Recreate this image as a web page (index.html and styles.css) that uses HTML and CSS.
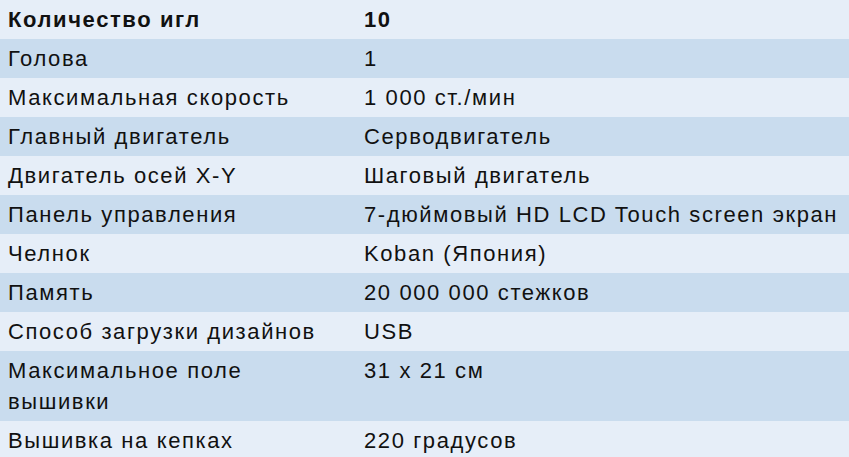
FILE: index.html
```html
<!DOCTYPE html>
<html lang="ru">
<head>
<meta charset="utf-8">
<link rel="stylesheet" href="styles.css">
</head>
<body>
<table class="specs">
  <colgroup><col class="c1"><col class="c2"></colgroup>
  <tr class="head"><td>Количество игл</td><td>10</td></tr>
  <tr><td>Голова</td><td>1</td></tr>
  <tr><td>Максимальная скорость</td><td>1 000 ст./мин</td></tr>
  <tr><td>Главный двигатель</td><td>Серводвигатель</td></tr>
  <tr><td>Двигатель осей X-Y</td><td>Шаговый двигатель</td></tr>
  <tr><td>Панель управления</td><td>7-дюймовый HD LCD Touch screen экран</td></tr>
  <tr><td>Челнок</td><td>Koban (Япония)</td></tr>
  <tr><td>Память</td><td>20 000 000 стежков</td></tr>
  <tr><td>Способ загрузки дизайнов</td><td>USB</td></tr>
  <tr><td>Максимальное поле вышивки</td><td>31 х 21 см</td></tr>
  <tr><td>Вышивка на кепках</td><td>220 градусов</td></tr>
</table>
</body>
</html>
```
FILE: styles.css
```css
html, body {
  margin: 0;
  padding: 0;
  background: #ffffff;
}
.specs {
  width: 849px;
  border-collapse: collapse;
  table-layout: fixed;
  font-family: "Liberation Sans", Arial, sans-serif;
  font-size: 22px;
  letter-spacing: 1.6px;
  line-height: 31px;
  color: #111111;
}
.c1 { width: 356px; }
.specs td {
  padding: 4px 8px;
  vertical-align: top;
}
.specs tr:nth-child(odd) { background: #e6eef8; }
.specs tr:nth-child(even) { background: #c9dcee; }
.specs tr.head td { font-weight: bold; }
```
